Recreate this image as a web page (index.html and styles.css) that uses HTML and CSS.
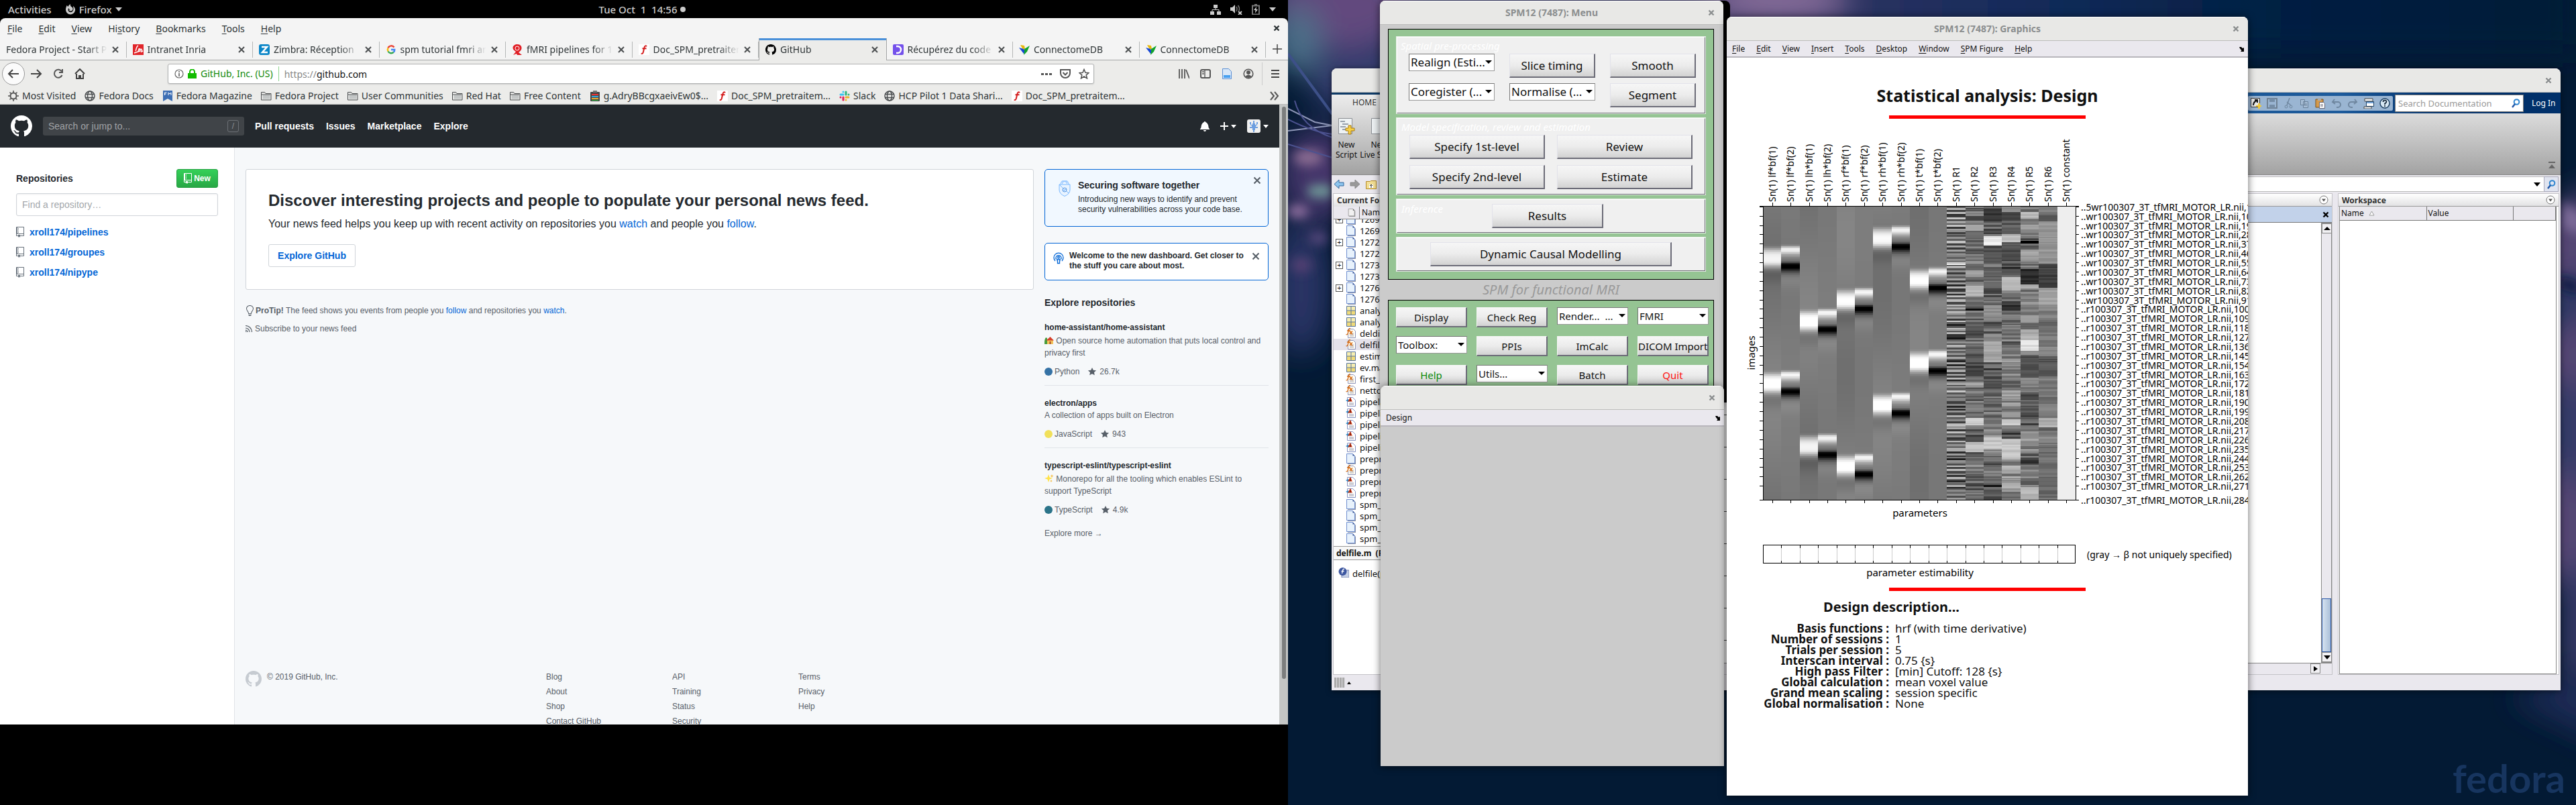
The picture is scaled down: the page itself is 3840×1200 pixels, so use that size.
FILE: index.html
```html
<!DOCTYPE html>
<html lang="en">
<head>
<meta charset="utf-8">
<title>Desktop</title>
<link rel="stylesheet" href="styles.css">
</head>
<body>
<svg class="defs" aria-hidden="true">
  <symbol id="mark" viewBox="0 0 16 16"><path d="M8 0C3.58 0 0 3.58 0 8c0 3.54 2.29 6.53 5.47 7.59.4.07.55-.17.55-.38 0-.19-.01-.82-.01-1.49-2.01.37-2.53-.49-2.69-.94-.09-.23-.48-.94-.82-1.13-.28-.15-.68-.52-.01-.53.63-.01 1.08.58 1.23.82.72 1.21 1.87.87 2.33.66.07-.52.28-.87.51-1.07-1.78-.2-3.64-.89-3.64-3.95 0-.87.31-1.59.82-2.15-.08-.2-.36-1.02.08-2.12 0 0 .67-.21 2.2.82.64-.18 1.32-.27 2-.27.68 0 1.36.09 2 .27 1.53-1.04 2.2-.82 2.2-.82.44 1.1.16 1.92.08 2.12.51.56.82 1.27.82 2.15 0 3.07-1.87 3.75-3.65 3.95.29.25.54.73.54 1.48 0 1.07-.01 1.93-.01 2.2 0 .21.15.46.55.38A8.013 8.013 0 0 0 16 8c0-4.42-3.58-8-8-8z"/></symbol>
  <symbol id="repo" viewBox="0 0 12 16"><path d="M4 9H3V8h1v1zm0-3H3v1h1V6zm0-2H3v1h1V4zm0-2H3v1h1V2zm8-1v12c0 .55-.45 1-1 1H6v2l-1.5-1.5L3 16v-2H1c-.55 0-1-.45-1-1V1c0-.55.45-1 1-1h10c.55 0 1 .45 1 1zm-1 10H1v2h2v-1h3v1h5v-2zm0-10H2v9h9V1z"/></symbol>
  <symbol id="star" viewBox="0 0 14 16"><path d="M14 6l-4.9-.64L7 1 4.9 5.36 0 6l3.6 3.26L2.67 14 7 11.67 11.33 14l-.93-4.74L14 6z"/></symbol>
  <symbol id="ox" viewBox="0 0 12 16"><path d="M7.48 8l3.75 3.75-1.48 1.48L6 9.48l-3.75 3.75-1.48-1.48L4.52 8 .77 4.25l1.48-1.48L6 6.52l3.75-3.75 1.48 1.48L7.48 8z"/></symbol>
  <symbol id="bell" viewBox="0 0 14 16"><path d="M14 12v1H0v-1l.73-.58c.77-.77.81-2.55 1.19-4.42C2.69 3.23 6 2 6 2c0-.55.45-1 1-1s1 .45 1 1c0 0 3.39 1.23 4.16 5 .38 1.88.42 3.66 1.19 4.42l.66.58H14zm-7 4c1.11 0 2-.89 2-2H5c0 1.11.89 2 2 2z"/></symbol>
  <symbol id="bulb" viewBox="0 0 12 16"><path d="M6.5 0C3.48 0 1 2.19 1 5c0 .92.55 2.25 1 3 1.34 2.25 1.78 2.78 2 4v1h5v-1c.22-1.22.66-1.75 2-4 .45-.75 1-2.08 1-3 0-2.81-2.48-5-5.5-5zm3.64 7.48c-.25.44-.47.8-.67 1.11-.86 1.41-1.25 2.06-1.45 3.23-.02.05-.02.11-.02.17H5c0-.06 0-.13-.02-.17-.2-1.17-.59-1.83-1.45-3.23-.2-.31-.42-.67-.67-1.11C2.44 6.78 2 5.65 2 5c0-2.2 2.02-4 4.5-4 1.22 0 2.36.42 3.22 1.19C10.55 2.94 11 3.94 11 5c0 .66-.44 1.78-.86 2.48zM4 14h5c-.23 1.14-1.3 2-2.5 2s-2.27-.86-2.5-2z"/></symbol>
  <symbol id="x" viewBox="0 0 12 12"><path d="M2 2l8 8M10 2l-8 8" fill="none" stroke="currentColor" stroke-width="2"/></symbol>
  <symbol id="wx" viewBox="0 0 10 10"><path d="M1.500 1.500l7 7M8.500 1.500l-7 7" fill="none" stroke="currentColor" stroke-width="2.400"/></symbol>
  <symbol id="folder" viewBox="0 0 16 16"><path d="M.5 2.500h5l1.500 2h8v9.500h-14.500z" fill="none" stroke="#4a4d4f"/><path d="M2.500 6.500h11v6h-11z" fill="#c3c6c6"/><path d="M1 6h13" stroke="#4a4d4f"/></symbol>
  <symbol id="globe" viewBox="0 0 16 16"><g fill="none" stroke="#4a4d4f" stroke-width="1.500"><circle cx="8" cy="8" r="7"/><ellipse cx="8" cy="8" rx="3.500" ry="7"/><path d="M1.500 5.500h13M1.500 10.500h13"/></g></symbol>
  <symbol id="fun" viewBox="0 0 16 16"><path d="M0 0h16v16H0z" fill="#fff"/><path d="M12 3.200C11 1.500 9 2 8.400 5L6.800 12c-.5 2-2 2.600-3 1.600M5.500 6.300h6" fill="none" stroke="#d41c1c" stroke-width="2"/></symbol>
  <symbol id="conn" viewBox="0 0 16 16"><path d="M2 1l6 1 1 5-3 1z" fill="#e8b90c"/><path d="M0 5l7 2 3 5-3 2z" fill="#1747d4"/><path d="M8 7l8-5-4 9-5 5 1-5z" fill="#12a32c"/></symbol>
  <symbol id="page" viewBox="0 0 16 16"><path d="M3 2h9l3 3v11H3z" fill="#8d94a8"/><path d="M1.500.5h9l3 3v11h-12z" fill="#e8f2fc" stroke="#6f8fd0"/><path d="M10.500.5v3h3z" fill="#35508f"/></symbol>
  <symbol id="mat" viewBox="0 0 16 16"><path d="M1.500 1.500h13v13h-13z" fill="#f7eeb0" stroke="#56749e"/><path d="M2 8h12v6H2z" fill="#f0da78"/><path d="M8 2v12M2 8h12" stroke="#56749e"/></symbol>
  <symbol id="fx" viewBox="0 0 16 16"><path d="M3.500 1.500h8l3 3v10h-11z" fill="#fffdf4" stroke="#8d94b8"/><path d="M6 8h6M6 10h6M6 12h6" stroke="#8b8b9b" stroke-width=".7"/><path d="M7 .8C5 0 4.800 2 4 5L3 8.500c-.5 1.500-1.500 1.500-2.500 1M2 4h5M6 4.500l4 5M10 4.500L6 9" fill="none" stroke="#d8690c" stroke-width="1.300"/></symbol>
  <symbol id="ml" viewBox="0 0 16 16"><path d="M2.500 1.500h8l4 4v9h-12z" fill="#fff" stroke="#8490c0"/><path d="M0 6l4-2 2 3-2 1z" fill="#2a8ac8"/><path d="M3 8l4-7 3 7-3-1z" fill="#cf3b14"/><path d="M7 1l1 6-2 1z" fill="#7d1708"/><path d="M5 10h7M5 12h7" stroke="#9a9aa8"/></symbol>
  <symbol id="lens" viewBox="0 0 14 14"><circle cx="8.500" cy="5" r="3.800" fill="none" stroke="#2f86d0" stroke-width="2"/><path d="M6 8l-4 5" stroke="#2358a8" stroke-width="2.500"/></symbol>
  <symbol id="drop" viewBox="0 0 14 14"><circle cx="7" cy="7" r="6" fill="#fff" stroke="#777"/><path d="M4 5.500h6l-3 4z" fill="#555"/></symbol>
  <symbol id="tear" viewBox="0 0 8 8"><path d="M0 1l3 0 2 2 2-1v6H2l1.500-2-2-2z" fill="#000"/></symbol>
</svg>

<div class="desk">
  <section class="screen-left">
    <header class="topbar">
      <div class="tb-left"><span>Activities</span>
        <span class="app"><svg width="16" height="16" viewBox="0 0 16 16"><path d="M8 15.500A7 7 0 0 1 1 8.500C1 5.500 2 4 2.500 2l2 2C5 2.500 6.500 1 8 0c-.5 2 0 3 2 4.500 3 2 1.500 6-1.500 6-2.500 0-3-2-3-2s1 .5 2 0c-1.500-.5-2-1.500-2-2.500-1 1-1.500 2.500-.500 4.500 2 3 7 2 7.500-2.500.3-2-.5-3-.5-5 2 1.500 3.500 4 3 6.500a7 7 0 0 1-7 6z" fill="#ccc"/></svg>Firefox <i class="tri"></i></span></div>
      <div class="clock">Tue Oct&nbsp; 1 &nbsp;14:56 <i class="dot"></i></div>
      <div class="tb-right">
        <svg width="16" height="16" viewBox="0 0 16 16"><path d="M5 1h6v5H5zM0 11h6v5H0zM10 11h6v5h-6z" fill="#ccc"/><path d="M8 6v2.500M3 11V8.500h10V11" fill="none" stroke="#ccc"/></svg>
        <svg width="18" height="16" viewBox="0 0 18 16"><path d="M0 5h3l4-4v13l-4-4H0z" fill="#ccc"/><path d="M9 4q2 3 0 7M11.500 2q3.500 5 1 8" fill="none" stroke="#777" stroke-width="1.500"/><path d="M12 11l5 5M17 11l-5 5" stroke="#ccc" stroke-width="1.800"/></svg>
        <svg width="12" height="16" viewBox="0 0 12 16"><path d="M1 2.500h10v13H1z" fill="none" stroke="#777" stroke-width="2"/><path d="M4 0h4v2H4z" fill="#777"/><path d="M7 4L3 9h2.500L5 13.500 9 8H6.500z" fill="#ccc"/></svg>
        <i class="tri"></i>
      </div>
    </header>

    <div class="firefox">
      <div class="menubar"><nav><a href="#"><u>F</u>ile</a><a href="#"><u>E</u>dit</a><a href="#"><u>V</u>iew</a><a href="#">Hi<u>s</u>tory</a><a href="#"><u>B</u>ookmarks</a><a href="#"><u>T</u>ools</a><a href="#"><u>H</u>elp</a></nav><button class="plain" aria-label="Close window"><svg width="10" height="10"><use href="#wx"/></svg></button></div>
      <div class="tabs">
        <div class="tab"><span>Fedora Project - Start Page</span><svg class="cl"><use href="#x"/></svg></div>
        <div class="tab"><svg class="fav" viewBox="0 0 16 16"><path d="M0 0h16v16H0z" fill="#e1262b"/><path d="M8 2c-3 1-3 7-4 8M2 13l9-3c-1-3 0-4-2-3l-1 4m3-3c2-2 3 0 2 3l2-1" fill="none" stroke="#fff" stroke-width="1.500"/></svg><span>Intranet Inria</span><svg class="cl"><use href="#x"/></svg></div>
        <div class="tab"><svg class="fav" viewBox="0 0 16 16"><rect width="16" height="16" rx="3" fill="#0a85c7"/><path d="M4 4h8l-7 8h8" fill="none" stroke="#fff" stroke-width="2.500"/></svg><span>Zimbra: Réception</span><svg class="cl"><use href="#x"/></svg></div>
        <div class="tab"><svg class="fav" viewBox="0 0 16 16"><g fill="none" stroke-width="2.500"><path d="M12.500 4.500A5.200 5.200 0 0 0 3.500 5.500" stroke="#ea4335"/><path d="M3.500 5.500a5.200 5.200 0 0 0 0 5" stroke="#fbbc05"/><path d="M3.500 10.500a5.200 5.200 0 0 0 8.300 1.200" stroke="#34a853"/><path d="M11.800 11.700A5 5 0 0 0 13.200 8H8" stroke="#4285f4"/></g></svg><span>spm tutorial fmri analysis</span><svg class="cl"><use href="#x"/></svg></div>
        <div class="tab"><svg class="fav" viewBox="0 0 16 16"><path d="M8 0c5 0 7 3 6.500 6.500C14 9 12 11 10 12l5 4H8l-1-2-5 2 4-5C3 9 1 7 1.500 4.500 2 2 5 0 8 0z" fill="#e01f26"/><circle cx="8" cy="6" r="3" fill="none" stroke="#fff"/></svg><span>fMRI pipelines for 1st level</span><svg class="cl"><use href="#x"/></svg></div>
        <div class="tab"><svg class="fav"><use href="#fun"/></svg><span>Doc_SPM_pretraitement</span><svg class="cl"><use href="#x"/></svg></div>
        <div class="tab on"><svg class="fav"><use href="#mark"/></svg><span>GitHub</span><svg class="cl"><use href="#x"/></svg></div>
        <div class="tab"><svg class="fav" viewBox="0 0 16 16"><rect width="16" height="16" rx="2" fill="#7451eb"/><path d="M5 3h2a5 5 0 0 1 0 10H5" fill="none" stroke="#fff" stroke-width="2.500"/></svg><span>Récupérez du code depuis</span><svg class="cl"><use href="#x"/></svg></div>
        <div class="tab"><svg class="fav"><use href="#conn"/></svg><span>ConnectomeDB</span><svg class="cl"><use href="#x"/></svg></div>
        <div class="tab"><svg class="fav"><use href="#conn"/></svg><span>ConnectomeDB</span><svg class="cl"><use href="#x"/></svg></div>
        <button class="newtab plain" aria-label="New tab"><svg width="16" height="16"><path d="M8 1v14M1 8h14" stroke="#444" stroke-width="1.500"/></svg></button>
      </div>
      <div class="navbar">
        <button class="back plain" aria-label="Back"><svg width="18" height="16" viewBox="0 0 18 16"><path d="M17 8H2M8 2L2 8l6 6" fill="none" stroke="#444" stroke-width="2"/></svg></button>
        <div class="navicons">
          <svg width="18" height="16" viewBox="0 0 18 16"><path d="M1 8h15M10 2l6 6-6 6" fill="none" stroke="#444" stroke-width="2"/></svg>
          <svg width="16" height="16" viewBox="0 0 16 16"><path d="M13 4.500A6 6 0 1 0 13.500 10M14 1v5H9" fill="none" stroke="#555" stroke-width="2"/></svg>
          <svg width="16" height="16" viewBox="0 0 16 16"><path d="M1 8l7-7 7 7M3 8v7h10V8M7 15v-4h2v4" fill="none" stroke="#444" stroke-width="2"/></svg>
        </div>
        <div class="urlbar">
          <svg width="14" height="14" viewBox="0 0 14 14"><circle cx="7" cy="7" r="6" fill="none" stroke="#666" stroke-width="1.200"/><path d="M7 6v5M7 3v2" stroke="#555" stroke-width="1.500"/></svg>
          <svg width="13" height="14" viewBox="0 0 13 14"><path d="M0 6h13v8H0z" fill="#12bc00"/><path d="M3 7V4a3.500 3.500 0 0 1 7 0v3" fill="none" stroke="#12bc00" stroke-width="2"/></svg>
          <span class="ev">GitHub, Inc. (US)</span>
          <label class="proto" for="url">https://</label><input id="url" value="github.com">
          <svg width="16" height="16"><path d="M0 7h4v3H0zM6 7h4v3H6zM12 7h4v3h-4z" fill="#555"/></svg>
          <svg width="16" height="16" viewBox="0 0 16 16"><path d="M1 2h14v5a7 7 0 0 1-14 0z" fill="none" stroke="#555" stroke-width="2"/><path d="M4.500 6L8 9.500 11.500 6" fill="none" stroke="#555" stroke-width="2"/></svg>
          <svg width="16" height="16" viewBox="0 0 16 16"><path d="M8 1.500l2 4.700 5 .4-3.800 3.200 1.200 5L8 12l-4.400 2.800 1.200-5L1 6.600l5-.4z" fill="none" stroke="#555" stroke-width="1.600"/></svg>
        </div>
        <div class="navright">
          <svg width="16" height="16"><path d="M1 1v14M5 1v14M9 1v14M11 2l5 13" stroke="#555" stroke-width="1.800"/></svg>
          <svg width="16" height="16"><rect x="1" y="2" width="14" height="12" rx="2" fill="none" stroke="#555" stroke-width="2"/><path d="M7 2v12M3 5h3M3 8h3" stroke="#555" stroke-width="1.300"/></svg>
          <svg width="16" height="16"><path d="M1.500.5h9l4 4v11h-13z" fill="#d8e7f8" stroke="#5b8fd4"/><path d="M3 10h10v4H3z" fill="#48a0f0"/></svg>
          <svg width="16" height="16"><circle cx="8" cy="8" r="6.800" fill="none" stroke="#555" stroke-width="1.600"/><circle cx="8" cy="6" r="3" fill="#555"/><path d="M3 12q5-5 10 0-5 4-10 0z" fill="#555"/></svg>
          <i class="sep"></i>
          <svg width="14" height="14"><path d="M1 2h12M1 7h12M1 12h12" stroke="#444" stroke-width="2"/></svg>
        </div>
      </div>
      <nav class="bookmarks">
        <a href="#"><svg class="fav" viewBox="0 0 16 16"><circle cx="8" cy="8" r="4.500" fill="none" stroke="#555" stroke-width="2"/><path d="M8 0v3M8 13v3M0 8h3M13 8h3M2.500 2.500l2 2M11.500 11.500l2 2M13.500 2.500l-2 2M4.500 11.500l-2 2" stroke="#555" stroke-width="1.600"/></svg>Most Visited</a>
        <a href="#"><svg class="fav"><use href="#globe"/></svg>Fedora Docs</a>
        <a href="#"><svg class="fav" viewBox="0 0 16 16"><path d="M1 0h14v16l-7-4-7 4z" fill="#3c6eb4"/><path d="M3.500 7V3h3M3.500 5h2M9 7V3l2 2 2-2v4" stroke="#fff" fill="none"/></svg>Fedora Magazine</a>
        <a href="#"><svg class="fav"><use href="#folder"/></svg>Fedora Project</a>
        <a href="#"><svg class="fav"><use href="#folder"/></svg>User Communities</a>
        <a href="#"><svg class="fav"><use href="#folder"/></svg>Red Hat</a>
        <a href="#"><svg class="fav"><use href="#folder"/></svg>Free Content</a>
        <a href="#"><svg class="fav" viewBox="0 0 16 16"><rect x="1" y="2" width="14" height="14" rx="1" fill="#444"/><path d="M5 0h6v3H5z" fill="#777"/><path d="M3 6h10" stroke="#e33" stroke-width="2"/><path d="M3 9h10" stroke="#3ad" stroke-width="2"/><path d="M3 12h10" stroke="#ea3" stroke-width="2"/><path d="M3 14.500h10" stroke="#3b4"/></svg>g.AdryBBcgxaeivEw0$...</a>
        <a href="#"><svg class="fav"><use href="#fun"/></svg>Doc_SPM_pretraitem...</a>
        <a href="#"><svg class="fav" viewBox="0 0 16 16"><g stroke-width="3" stroke-linecap="round"><path d="M2 6h4M6 2v0" stroke="#36c5f0"/><path d="M10 2v4M14 6v0" stroke="#2eb67d"/><path d="M10 10h4M10 14v0" stroke="#ecb22e"/><path d="M6 10v4M2 10v0" stroke="#e01e5a"/></g></svg>Slack</a>
        <a href="#"><svg class="fav"><use href="#globe"/></svg>HCP Pilot 1 Data Shari...</a>
        <a href="#"><svg class="fav"><use href="#fun"/></svg>Doc_SPM_pretraitem...</a>
        <a href="#" class="more" aria-label="More bookmarks"><svg width="16" height="14"><path d="M2 1l5 6-5 6M8 1l5 6-5 6" fill="none" stroke="#555" stroke-width="2"/></svg></a>
      </nav>

      <div class="view">
        <div class="gh">
          <header class="gh-head">
            <a href="#" aria-label="GitHub"><svg width="32" height="32" fill="#fff"><use href="#mark"/></svg></a>
            <div class="gh-search"><input placeholder="Search or jump to..." aria-label="Search or jump to"><kbd>/</kbd></div>
            <nav><a href="#">Pull requests</a><a href="#">Issues</a><a href="#">Marketplace</a><a href="#">Explore</a></nav>
            <div class="gh-user">
              <svg width="14" height="16" fill="#fff"><use href="#bell"/></svg>
              <span><svg width="12" height="12"><path d="M6 0v12M0 6h12" stroke="#fff" stroke-width="2"/></svg><i class="tri s"></i></span>
              <span><svg width="20" height="20" viewBox="0 0 20 20"><rect width="20" height="20" rx="3" fill="#f0f0f0"/><path d="M9 2h2v4h1v2h2V4h2v3h-1v2h-2v2h3v2h-4v3h-1v3H9v-3H8v-3H4v-2h3V9H5V7H4V4h2v4h2V6h1z" fill="#6d9ee0"/></svg><i class="tri s"></i></span>
            </div>
          </header>
          <div class="gh-body">
            <aside class="side">
              <div class="side-top"><h2>Repositories</h2><button class="new"><svg width="12" height="16" fill="#fff"><use href="#repo"/></svg>New</button></div>
              <input class="find" placeholder="Find a repository…" aria-label="Find a repository">
              <ul><li><a href="#"><svg width="12" height="16" fill="#6a737d"><use href="#repo"/></svg>xroll174/pipelines</a></li><li><a href="#"><svg width="12" height="16" fill="#6a737d"><use href="#repo"/></svg>xroll174/groupes</a></li><li><a href="#"><svg width="12" height="16" fill="#6a737d"><use href="#repo"/></svg>xroll174/nipype</a></li></ul>
            </aside>
            <div class="main">
              <div class="cols">
                <div class="feed">
                  <div class="hero"><h1>Discover interesting projects and people to populate your personal news feed.</h1><p>Your news feed helps you keep up with recent activity on repositories you <a href="#">watch</a> and people you <a href="#">follow</a>.</p><button class="explore">Explore GitHub</button></div>
                  <p class="tip"><svg width="12" height="16" fill="#586069"><use href="#bulb"/></svg><span><b>ProTip!</b> The feed shows you events from people you <a href="#">follow</a> and repositories you <a href="#">watch</a>.</span></p>
                  <p class="tip sub"><svg width="10" height="10" viewBox="0 0 10 10"><path d="M0 7a3 3 0 0 1 3 3H0zM0 4a6 6 0 0 1 6 6M0 .5A9.500 9.500 0 0 1 9.500 10" fill="none" stroke="#586069" stroke-width="1.200"/></svg><span>Subscribe to your news feed</span></p>
                </div>
                <aside class="right">
                  <div class="card sec"><svg width="18" height="24" viewBox="0 0 18 24"><path d="M3 6a6 6 0 0 1 12 0M5.500 5a3.500 3.500 0 0 1 7 0" fill="none" stroke="#9ecbff" stroke-width="1.500"/><path d="M1 6h16v8q0 6-8 9.500Q1 20 1 14zM1 6l6 6M11 15l4 4" fill="#e8f3ff" stroke="#79b8ff"/><circle cx="9" cy="14" r="3" fill="none" stroke="#4a90e0"/><path d="M7.500 14l1 1 2-2" fill="none" stroke="#2188ff"/></svg><div><h3>Securing software together</h3><p>Introducing new ways to identify and prevent security vulnerabilities across your code base.</p></div><button class="plain" aria-label="Dismiss"><svg width="12" height="16" fill="#586069"><use href="#ox"/></svg></button></div>
                  <div class="card wel"><svg width="16" height="18" viewBox="0 0 16 18"><g fill="none" stroke="#0366d6" stroke-width="1.300"><path d="M3 13a7 7 0 1 1 10 0M4.500 10.500a4 4 0 1 1 7 0"/><circle cx="8" cy="7.500" r="1.300"/><path d="M6 10.500h4v2H9.500v4h-3v-4H6z"/></g></svg><p>Welcome to the new dashboard. Get closer to the stuff you care about most.</p><button class="plain" aria-label="Dismiss"><svg width="12" height="16" fill="#586069"><use href="#ox"/></svg></button></div>
                  <h2>Explore repositories</h2>
                  <div class="repo"><h4>home-assistant/home-assistant</h4><p class="em"><svg width="14" height="12" viewBox="0 0 14 12"><path d="M0 8q1-8 4-5v9H0z" fill="#4a9c3c"/><path d="M4 6h9v6H4z" fill="#f2c35c"/><path d="M2.500 6.500L8.500 1 14 6.500z" fill="#d6402a"/><path d="M7.500 8h2v4h-2z" fill="#a4482a"/></svg> Open source home automation that puts local control and privacy first</p><div class="meta"><i class="lang py"></i>Python<svg width="14" height="14"><use href="#star"/></svg>26.7k</div></div>
                  <div class="repo"><h4>electron/apps</h4><p>A collection of apps built on Electron</p><div class="meta"><i class="lang js"></i>JavaScript<svg width="14" height="14"><use href="#star"/></svg>943</div></div>
                  <div class="repo"><h4>typescript-eslint/typescript-eslint</h4><p class="em"><svg width="14" height="12" viewBox="0 0 14 12"><path d="M6 0l1.500 4.500L12 6 7.500 7.500 6 12 4.500 7.500 0 6l4.500-1.500z" fill="#ffe34a"/><path d="M11 0l.7 2 2 .7-2 .6-.7 2-.7-2-2-.6 2-.7zM10 8l.6 1.400 1.400.6-1.400.6L10 12l-.6-1.400L8 10l1.400-.6z" fill="#f5b93a"/></svg> Monorepo for all the tooling which enables ESLint to support TypeScript</p><div class="meta"><i class="lang ts"></i>TypeScript<svg width="14" height="14"><use href="#star"/></svg>4.9k</div></div>
                  <a href="#" class="mo">Explore more →</a>
                </aside>
              </div>
              <footer><div class="copy"><svg width="24" height="24" fill="#c6cbd1"><use href="#mark"/></svg>© 2019 GitHub, Inc.</div>
                <ul><li><a href="#">Blog</a></li><li><a href="#">About</a></li><li><a href="#">Shop</a></li><li><a href="#">Contact GitHub</a></li></ul>
                <ul><li><a href="#">API</a></li><li><a href="#">Training</a></li><li><a href="#">Status</a></li><li><a href="#">Security</a></li></ul>
                <ul><li><a href="#">Terms</a></li><li><a href="#">Privacy</a></li><li><a href="#">Help</a></li></ul>
              </footer>
            </div>
          </div>
        </div>
        <div class="sbar"><i></i></div>
      </div>
    </div>
  </section>

  <section class="screen-right">
    <svg class="paper" viewBox="0 0 1920 1200" preserveAspectRatio="none" aria-hidden="true">
      <defs><filter id="b1" x="-50%" y="-50%" width="200%" height="200%"><feGaussianBlur stdDeviation="22"/></filter><filter id="b2" x="-50%" y="-50%" width="200%" height="200%"><feGaussianBlur stdDeviation="8"/></filter>
      <linearGradient id="sky"><stop offset="0" stop-color="#2c3c6e"/><stop offset=".35" stop-color="#3a3565"/><stop offset=".6" stop-color="#102a58"/><stop offset=".75" stop-color="#032044"/><stop offset="1" stop-color="#031a36"/></linearGradient></defs>
      <path d="M0 0h1920v1200H0z" fill="#031a34"/>
      <path d="M0-60h1920v140H0z" fill="url(#sky)" filter="url(#b1)"/>
      <g filter="url(#b1)"><ellipse cx="80" cy="10" rx="110" ry="60" fill="#624a7e"/><ellipse cx="15" cy="60" rx="35" ry="50" fill="#4c7088"/><ellipse cx="110" cy="120" rx="80" ry="50" fill="#343c70"/><ellipse cx="730" cy="0" rx="110" ry="30" fill="#8a6f9c"/><ellipse cx="20" cy="430" rx="40" ry="100" fill="#2a3466"/><ellipse cx="45" cy="260" rx="55" ry="70" fill="#44366a"/></g>
      <g filter="url(#b2)"><ellipse cx="30" cy="235" rx="22" ry="12" fill="#8a6c92"/><ellipse cx="48" cy="285" rx="20" ry="10" fill="#6f9a98"/><ellipse cx="15" cy="315" rx="16" ry="10" fill="#9070a0"/><ellipse cx="45" cy="355" rx="14" ry="10" fill="#54477c"/><ellipse cx="20" cy="395" rx="16" ry="12" fill="#513f72"/></g>
      <g fill="none" stroke-width="2"><path d="M0 162l40 20 26 5M0 195l66-8" stroke="#8f97b8"/><path d="M0 178q40 20 66 22M10 150q10 40 56 55M0 215l66 20" stroke="#4c5290"/><path d="M0 80L66 170" stroke="#3d5088" stroke-width="4"/></g>
      <g filter="url(#b1)"><path d="M1870 320l90-50v600l-60-20-30 40z" fill="#564674"/><path d="M1860 440l80-40v60l-80 60z" fill="#243460"/><path d="M1880 560l60 20v160l-70-60z" fill="#313a68"/><path d="M1900 840h60v160h-60z" fill="#3c3c6c"/><path d="M1820 1040l140-50v120z" fill="#1c2a54"/></g>
      <g filter="url(#b2)"><path d="M1900 300l30 20v30l-30-10z" fill="#7c6a98"/><path d="M1895 410l30 10v20l-30-10z" fill="#0c1c44"/></g>
    </svg>
    <div class="fedora">fedora</div>

    <div class="win matlab">
      <div class="title tall"><button class="plain" aria-label="Close"><svg width="10" height="10"><use href="#wx"/></svg></button></div>
      <div class="strip"><span class="home">HOME</span>
        <div class="quick">
          <svg width="16" height="16"><path d="M.5.500h13v13H.5z" fill="#e8e8e8" stroke="#333"/><path d="M4 11q0-5 5-7M6 3h4v4" fill="none" stroke="#111" stroke-width="2"/><path d="M11 8h3v3h2v2h-2v3h-3v-3H8v-2h3z" fill="#f3c838"/></svg>
          <svg width="16" height="16" opacity=".35"><path d="M1 1h14v14H1z" fill="none" stroke="#222" stroke-width="2"/><path d="M4 1h8v5H4zM4 10h8v5H4z" fill="#345"/></svg>
          <svg width="16" height="16" opacity=".35"><path d="M10 0L6 11M6 6l6 5" stroke="#234" stroke-width="1.500"/><circle cx="5" cy="13" r="2" fill="none" stroke="#234"/><circle cx="12" cy="13" r="2" fill="none" stroke="#234"/></svg>
          <svg width="16" height="16" opacity=".4"><path d="M2.500 2.500h6v8h-6zM6.500 5.500h7v9h-7z" fill="#bcd" stroke="#234"/><path d="M8 9h4M8 11h4" stroke="#234"/></svg>
          <svg width="16" height="16"><path d="M1 2h11v12H1z" fill="#d49a4c" stroke="#7c5018"/><path d="M4 0h5v4H4z" fill="#aaa"/><path d="M6.500 6.500h6l2 2v7h-8z" fill="#fff" stroke="#667"/><path d="M8 10h4M8 12h4" stroke="#667"/></svg>
          <svg width="16" height="16" opacity=".35"><path d="M5 2L2 6l4 3M2 6h8a4 4 0 0 1 0 8H8" fill="none" stroke="#234" stroke-width="2"/></svg>
          <svg width="16" height="16" opacity=".35"><path d="M11 2l3 4-4 3M14 6H6a4 4 0 0 0 0 8h2" fill="none" stroke="#234" stroke-width="2"/></svg>
          <svg width="16" height="16"><path d="M2 1h12v4H2zM1 13h11v3H1z" fill="#eee" stroke="#444"/><path d="M4.500 5.500h11v7h-11z" fill="#fff" stroke="#246"/><path d="M5 6h10v2H5z" fill="#7aa8dc"/></svg>
          <svg width="16" height="16"><circle cx="8" cy="8" r="7" fill="#d8e8f4" stroke="#246" stroke-width="1.500"/><path d="M5.500 6q0-2.500 2.500-2.500t2.500 2q0 1.500-2.500 3V10M8 11v2" fill="none" stroke="#123" stroke-width="1.700"/></svg>
        </div>
        <label class="docs"><input placeholder="Search Documentation" aria-label="Search Documentation"><svg width="14" height="14"><use href="#lens"/></svg></label>
        <a href="#" class="login">Log In</a>
      </div>
      <div class="ribbon">
        <button class="plain rb"><svg width="26" height="26" viewBox="0 0 26 26"><path d="M1.500 1.500h20v23h-20z" fill="#eef2f4" stroke="#8b8f94"/><path d="M4 6h7M7 10h9M4 14h8M7 18h6" stroke="#7c8794" stroke-width="1.500"/><path d="M16 12h4v4h5v4h-5v5h-4v-5h-4v-4h4z" fill="#f7cf45" stroke="#a77a10"/></svg><span>New<br>Script</span></button>
        <button class="plain rb"><svg width="26" height="26" viewBox="0 0 26 26"><path d="M1.500 1.500h20v23h-20z" fill="#eef2f4" stroke="#8b8f94"/></svg><span>New<br>Live Script</span></button>
        <svg class="fold" width="12" height="12"><path d="M1 1h10v2H1zM6 5l5 6H1z" fill="#666"/></svg>
      </div>
      <div class="addr">
        <svg width="16" height="16"><path d="M8 1v4h7v5H8v4L1 7.500z" fill="#8cc4ee" stroke="#35689c"/></svg><svg width="16" height="16"><path d="M8 1v4H1v5h7v4l7-6.500z" fill="#999" stroke="#888"/></svg><svg width="16" height="16"><path d="M.5 3.500h6l1-1h8v12H.5z" fill="#f3df95" stroke="#b58a2a"/><path d="M5 8h6v5H5z" fill="#fff"/><path d="M8 13V8M6 10l2-2 2 2" stroke="#333" fill="none"/></svg>
        <div class="path"><i class="tri k"></i></div><button class="plain go" aria-label="Search"><svg width="14" height="14"><use href="#lens"/></svg></button>
      </div>
      <div class="panes">
        <div class="pane folderpane">
          <div class="ph">Current Folder</div>
          <div class="fh"><span><svg width="12" height="14"><use href="#page"/></svg></span><span>Name</span></div>
          <ul class="files">
            <li class="x cut"><svg><use href="#page"/></svg>1269</li><li><svg><use href="#page"/></svg>1269</li><li class="x"><svg><use href="#page"/></svg>1272</li><li><svg><use href="#page"/></svg>1272</li><li class="x"><svg><use href="#page"/></svg>1273</li><li><svg><use href="#page"/></svg>1273</li><li class="x"><svg><use href="#page"/></svg>1276</li><li><svg><use href="#page"/></svg>1276</li>
            <li><svg><use href="#mat"/></svg>analyse.mat</li><li><svg><use href="#mat"/></svg>analyse.mat</li><li><svg><use href="#fx"/></svg>deldir.m</li><li class="sel"><svg><use href="#fx"/></svg>delfile.m</li><li><svg><use href="#mat"/></svg>estim.mat</li><li><svg><use href="#mat"/></svg>ev.mat</li><li><svg><use href="#fx"/></svg>first_level.m</li><li><svg><use href="#fx"/></svg>nettoyage.m</li>
            <li><svg><use href="#ml"/></svg>pipeline.m</li><li><svg><use href="#ml"/></svg>pipeline.m</li><li><svg><use href="#ml"/></svg>pipeline.m</li><li><svg><use href="#ml"/></svg>pipeline.m</li><li><svg><use href="#ml"/></svg>pipeline.m</li><li><svg><use href="#page"/></svg>preproc</li><li><svg><use href="#fx"/></svg>preproc.m</li><li><svg><use href="#ml"/></svg>preproc.m</li><li><svg><use href="#ml"/></svg>preproc.m</li><li><svg><use href="#page"/></svg>spm_</li><li><svg><use href="#page"/></svg>spm_</li><li><svg><use href="#page"/></svg>spm_</li><li><svg><use href="#page"/></svg>spm_</li>
          </ul>
          <div class="dh">delfile.m &nbsp;(Function)</div>
          <div class="dl"><svg width="16" height="15" viewBox="0 0 16 15"><path d="M5 4h11v11H5z" fill="#c6d0e6" stroke="#6c7cab"/><circle cx="6.500" cy="6" r="6" fill="#3c56a0"/><path d="M9 2.500q-2-1-2.500 2L5.500 9M4.500 5.500h4" fill="none" stroke="#fff" stroke-width="1.300"/></svg>delfile(path)</div>
        </div>
        <div class="pane cmd">
          <div class="ph"><svg width="14" height="14"><use href="#drop"/></svg></div>
          <div class="bluebar"><svg width="10" height="10"><use href="#wx"/></svg></div>
          <div class="editor"><div class="lines"></div><div class="vs"><b><i class="tri k up"></i></b><em></em><b><i class="tri k"></i></b></div></div>
          <div class="hs"><b><i class="tri k rt"></i></b></div>
        </div>
        <div class="pane ws">
          <div class="ph">Workspace<svg width="14" height="14"><use href="#drop"/></svg></div>
          <div class="grid"><table><thead><tr><th>Name <svg width="9" height="8"><path d="M1 7l3.500-6L8 7z" fill="#fff" stroke="#999"/></svg></th><th>Value</th><th></th></tr></thead></table></div>
        </div>
      </div>
      <div class="status"><i class="grip"></i><i class="tri k up sm"></i></div>
    </div>

    <div class="shade"></div>

    <div class="win menu">
      <div class="title">SPM12 (7487): Menu<button class="plain" aria-label="Close"><svg width="10" height="10"><use href="#wx"/></svg></button></div>
      <div class="mbody">
        <div class="green g1">
          <section class="grp p1"><h5>Spatial pre-processing</h5>
            <span class="pop"><select aria-label="Realign"><option>Realign (Esti...</option></select></span><button>Slice timing</button><button>Smooth</button>
            <span class="pop"><select aria-label="Coregister"><option>Coregister (...</option></select></span><span class="pop"><select aria-label="Normalise"><option>Normalise (...</option></select></span><button>Segment</button></section>
          <section class="grp p2"><h5>Model specification, review and estimation</h5><button>Specify 1st-level</button><button>Review</button><button>Specify 2nd-level</button><button>Estimate</button></section>
          <section class="grp p3"><h5>Inference</h5><button>Results</button></section>
          <section class="grp p4"><button>Dynamic Causal Modelling</button></section>
        </div>
        <p class="cap">SPM for functional MRI</p>
        <div class="green g2">
          <button>Display</button><button>Check Reg</button><span class="pop"><select aria-label="Render"><option>Render... &nbsp;...</option></select></span><span class="pop"><select aria-label="Modality"><option>FMRI</option></select></span>
          <span class="pop"><select aria-label="Toolbox"><option>Toolbox:</option></select></span><button>PPIs</button><button>ImCalc</button><button>DICOM Import</button>
          <button class="help">Help</button><span class="pop"><select aria-label="Utils"><option>Utils...</option></select></span><button>Batch</button><button class="quit">Quit</button>
        </div>
      </div>
    </div>

    <div class="win inter">
      <div class="title"><button class="plain" aria-label="Close"><svg width="10" height="10"><use href="#wx"/></svg></button></div>
      <div class="jm"><a href="#">Design</a><svg width="8" height="8"><use href="#tear"/></svg></div>
    </div>

    <div class="win graph">
      <div class="title">SPM12 (7487): Graphics<button class="plain" aria-label="Close"><svg width="10" height="10"><use href="#wx"/></svg></button></div>
      <div class="jm"><a href="#"><u>F</u>ile</a><a href="#"><u>E</u>dit</a><a href="#"><u>V</u>iew</a><a href="#"><u>I</u>nsert</a><a href="#"><u>T</u>ools</a><a href="#"><u>D</u>esktop</a><a href="#"><u>W</u>indow</a><a href="#"><u>S</u>PM Figure</a><a href="#"><u>H</u>elp</a><svg width="8" height="8"><use href="#tear"/></svg></div>
      <div class="fig">
        <h1>Statistical analysis: Design</h1>
        <hr>
        <svg id="plot" width="777" height="688" viewBox="0 0 777 688" role="img" aria-label="Design matrix"></svg>
        <hr class="second">
        <h2>Design description...</h2>
        <table><tbody>
          <tr><th scope="row">Basis functions :</th><td>hrf (with time derivative)</td></tr>
          <tr><th scope="row">Number of sessions :</th><td>1</td></tr>
          <tr><th scope="row">Trials per session :</th><td>5</td></tr>
          <tr><th scope="row">Interscan interval :</th><td>0.75 {s}</td></tr>
          <tr><th scope="row">High pass Filter :</th><td>[min] Cutoff: 128 {s}</td></tr>
          <tr><th scope="row">Global calculation :</th><td>mean voxel value</td></tr>
          <tr><th scope="row">Grand mean scaling :</th><td>session specific</td></tr>
          <tr><th scope="row">Global normalisation :</th><td>None</td></tr>
        </tbody></table>
      </div>
    </div>
  </section>
</div>
<script src="plot.js"></script>
</body>
</html>
```
FILE: plot.js
```js
// Design matrix: 284 scans by 17 regressors, drawn as grey rows, with axes and labels.
(function () {
  var svg = document.getElementById('plot');
  var NS = 'http://www.w3.org/2000/svg';
  var X0 = 54, Y0 = 130, W = 466, H = 438, N = 284, C = 17;
  var cw = W / C, rh = H / N;

  function add(name, attrs, text) {
    var e = document.createElementNS(NS, name);
    for (var k in attrs) e.setAttribute(k, attrs[k]);
    if (text !== undefined) e.textContent = text;
    svg.appendChild(e);
  }
  function line(x1, y1, x2, y2, c) {
    add('path', { d: 'M' + x1 + ' ' + y1 + 'L' + x2 + ' ' + y2, stroke: c || '#000', 'stroke-width': 1, 'shape-rendering': 'crispEdges' });
  }
  function cell(c, r, n, g) {
    g = Math.max(0, Math.min(255, Math.round(g)));
    var a = Math.round(X0 + c * cw), b = Math.round(X0 + (c + 1) * cw);
    var t = Math.round(Y0 + r * rh), u = Math.round(Y0 + (r + n) * rh);
    if (u > t) add('rect', { x: a, y: t, width: b - a, height: u - t, fill: 'rgb(' + g + ',' + g + ',' + g + ')' });
  }
  function gamma(k) { var f = 1; for (var i = 2; i < k; i++) f *= i; return f; }
  function hrf(t) {
    return t <= 0 ? 0 : Math.pow(t, 5) * Math.exp(-t) / gamma(6) - Math.pow(t, 15) * Math.exp(-t) / gamma(16) / 6;
  }
  function response(onsets, shift) {
    var v = [], m = 0;
    for (var r = 0; r < N; r++) {
      var s = 0;
      onsets.forEach(function (o) {
        for (var k = 0; k < 16; k++) {
          var t = (r - o - k) * 0.75;
          s += shift ? hrf(t) - hrf(t - 1) : hrf(t);
        }
      });
      v.push(s); m = Math.max(m, Math.abs(s));
    }
    return v.map(function (s) { return s / m; });
  }

  var onsets = [[35, 156], [96, 217], [76, 236], [16, 177], [56, 136]];
  onsets.forEach(function (o, i) {
    [0, 1].forEach(function (d) {
      var v = response(o, d);
      for (var r = 0; r < N; r++) {
        var drift = (d ? 3 : 11) * Math.sin(r / 42 + i * 1.9 + 3.4);
        cell(i * 2 + d, r, 1, 122 + drift + v[r] * 133);
      }
    });
  });

  var seed = 12345;
  function rnd() { seed = (seed * 1103515245 + 12345) % 2147483648; return seed / 2147483648; }
  var marks = [
    [[56, 1, 250], [114, 2, 30], [120, 2, 40], [127, 2, 20]],
    [[9, 5, 55], [18, 6, 160], [61, 8, 160], [77, 9, 185], [98, 3, 10], [154, 10, 65], [205, 7, 200], [228, 10, 190]],
    [[3, 12, 50], [29, 9, 240], [42, 13, 80], [55, 1, 0], [130, 20, 165], [224, 11, 200], [270, 2, 15]],
    [[6, 8, 60], [27, 8, 190], [40, 12, 75], [68, 14, 180], [96, 5, 40], [205, 7, 210], [224, 20, 200]],
    [[6, 6, 180], [34, 1, 0], [41, 12, 160], [61, 15, 40], [119, 10, 175], [130, 9, 225], [145, 20, 80], [244, 4, 55], [272, 12, 180]],
    [[8, 6, 95], [15, 40, 150], [61, 18, 65], [80, 15, 160], [145, 20, 85], [204, 1, 255], [205, 8, 175], [248, 33, 105]]
  ];
  for (var c = 0; c < 6; c++) {
    var slow = 0;
    for (var r = 0; r < N;) {
      var n = rnd() < 0.5 ? 2 : 1;
      slow = slow * 0.85 + (rnd() - 0.5) * 34;
      var g = c === 0 ? (r % 4 < 2 ? 70 : 165) + (rnd() - 0.5) * 80 : 112 + slow + (rnd() - 0.5) * (c === 5 ? 30 : 72);
      marks[c].forEach(function (m) { if (r >= m[0] && r < m[0] + m[1]) g = m[2] + (rnd() - 0.5) * (m[1] > 3 ? 28 : 0); });
      cell(10 + c, r, Math.min(n, N - r), g);
      r += n;
    }
  }
  cell(16, 0, N, 238);

  line(X0 - 5, Y0, X0 + W + 5, Y0); line(X0 - 5, Y0 + H, X0 + W + 5, Y0 + H);
  line(X0, Y0, X0, Y0 + H); line(X0 + W, Y0, X0 + W, Y0 + H);

  var names = [];
  ['lf', 'lh', 'rf', 'rh', 't'].forEach(function (n) { names.push(n + '*bf(1)', n + '*bf(2)'); });
  names.push('R1', 'R2', 'R3', 'R4', 'R5', 'R6', 'constant');
  names.forEach(function (n, i) {
    var x = Math.round(X0 + (i + 0.5) * cw);
    line(x, Y0 - 5, x, Y0); line(x, Y0 + H, x, Y0 + H + 5);
    add('text', { transform: 'translate(' + (x + 5) + ' ' + (Y0 - 6) + ') rotate(-90)' }, 'Sn(1) ' + n);
  });
  for (var k = 1; k <= 284; k = k === 271 ? 284 : k + 9) {
    var y = Math.round(Y0 + (k - 0.5) * rh);
    if (k === 284) y = Y0 + H;
    line(X0 - 5, y, X0, y); line(X0 + W, y, X0 + W + 5, y);
    add('text', { x: X0 + W + 8, y: y + 6 }, (k === 1 ? '..5wr' : k < 100 ? '..wr' : '..r') + '100307_3T_tfMRI_MOTOR_LR.nii,' + k);
    if (k === 284) break;
  }
  add('text', { transform: 'translate(42 349) rotate(-90)', 'text-anchor': 'middle', 'class': 'ax' }, 'images');
  add('text', { x: 288, y: 593, 'text-anchor': 'middle', 'class': 'ax' }, 'parameters');

  add('rect', { x: X0 + 0.5, y: 635.5, width: W - 1, height: 27, fill: '#fff', stroke: '#000' });
  for (var i = 1; i < C; i++) {
    var bx = Math.round(X0 + i * cw);
    line(bx, 636, bx, 662, '#ccc'); line(bx, 636, bx, 640); line(bx, 659, bx, 663);
  }
  add('text', { x: 537, y: 655 }, '(gray → β not uniquely specified)');
  add('text', { x: 288, y: 682, 'text-anchor': 'middle', 'class': 'ax' }, 'parameter estimability');
})();
```
FILE: styles.css
```css
* { box-sizing: border-box; margin: 0; padding: 0; }
body { background: #000; font-family: "Noto Sans", "DejaVu Sans", sans-serif; font-size: 14px; color: #2e3436; }
a { color: inherit; text-decoration: none; }
u { text-underline-offset: 2px; }
ul { list-style: none; }
svg { display: block; flex: none; }
input, button, select { font: inherit; color: inherit; }
.defs { position: absolute; width: 0; height: 0; }
.plain { background: none; border: 0; }
.desk { display: grid; grid-template-columns: 1fr 1fr; min-height: 100vh; }
.tri { display: inline-block; border: 5px solid transparent; border-top: 6px solid #ccc; border-bottom: 0; }
.tri.s { border-width: 4px; border-top: 5px solid #fff; border-bottom: 0; }
.tri.k { border-top-color: #000; }
.tri.up { border-top: 0; border-bottom: 5px solid #000; }
.tri.rt { border: 4px solid transparent; border-left: 6px solid #000; border-right: 0; }
.tri.sm { border-width: 0 3px 4px; }

/* Left screen */
.screen-left { aspect-ratio: 16 / 9; display: flex; flex-direction: column; overflow: hidden; align-self: start; min-height: 0; }
.topbar { display: grid; grid-template-columns: 1fr auto 1fr; height: 27px; align-items: center; padding: 0 18px 0 12px; font-size: 15px; font-weight: 500; color: #ccc; flex: none; }
.tb-left, .tb-right, .app, .clock { display: flex; align-items: center; }
.tb-left { gap: 20px; } .app { gap: 5px; }
.tb-right { gap: 14px; justify-content: flex-end; }
.clock { gap: 4px; }
.dot { width: 8px; height: 8px; border-radius: 50%; background: #ccc; }
.firefox { flex: 1; min-height: 0; display: flex; flex-direction: column; background: #f4f4f4; border-radius: 8px 8px 0 0; }
.menubar { display: flex; height: 30px; align-items: center; justify-content: space-between; padding: 0 12px 0 11px; flex: none; }
.menubar nav { display: flex; gap: 24px; }
.tabs { display: flex; height: 33px; flex: none; border-bottom: 1px solid #a4a6a6; }
.tab { flex: 1; min-width: 0; display: flex; align-items: center; gap: 6px; padding: 0 11px 0 9px; position: relative; height: 33px; }
.tab::after { content: ""; position: absolute; right: 0; top: 5px; bottom: 4px; width: 1px; background: #b5b7b7; }
.tab span { flex: 1; min-width: 0; overflow: hidden; white-space: nowrap; -webkit-mask-image: linear-gradient(to left, transparent, #000 30px); mask-image: linear-gradient(to left, transparent, #000 30px); }
.tab.on { background: #ececea; border: 1px solid #a4a6a6; border-width: 0 1px; box-shadow: inset 0 3px #4a90d9; }
.tab.on::after { display: none; }
.fav { width: 16px; height: 16px; }
.cl { width: 12px; height: 12px; color: #4a4d4f; }
.newtab { width: 33px; display: grid; place-items: center; }
.navbar { display: flex; height: 40px; align-items: center; background: #ececea; padding: 0 12px 0 3px; flex: none; }
.back { width: 34px; height: 34px; border: 1px solid #999; border-radius: 50%; background: #fbfbfb; display: grid; place-items: center; }
.navicons { display: flex; gap: 16px; width: 213px; padding-left: 8px; }
.urlbar { flex: 1; display: flex; align-items: center; height: 30px; background: #fff; border: 1px solid #b0b2b2; border-radius: 3px; box-shadow: 0 1px 2px #ccc; padding: 0 6px 0 9px; gap: 12px; }
.urlbar > svg:nth-child(2) { margin-left: -6px; }
.urlbar .ev { color: #128a0a; margin-left: -6px; padding-right: 8px; line-height: 22px; border-right: 1px solid #8fd48f; }
.proto { color: #888; margin-left: -4px; }
.urlbar input { flex: 1; border: 0; outline: 0; color: #111; margin-left: -12px; background: none; }
.navright { display: flex; gap: 16px; align-items: center; margin-left: 126px; }
.sep { width: 1px; height: 34px; background: #ccc; margin: 0 -4px; }
.bookmarks { display: flex; align-items: center; gap: 13px; height: 26px; padding: 0 12px; background: #ececea; border-bottom: 1px solid #bbb; flex: none; white-space: nowrap; }
.bookmarks a { display: flex; align-items: center; gap: 5px; }
.bookmarks .more { margin-left: auto; }
.view { flex: 1; min-height: 0; display: flex; overflow: hidden; }
.gh { flex: 1; min-width: 0; display: flex; flex-direction: column; overflow: hidden; font-family: "Liberation Sans", Arial, sans-serif; color: #24292e; background: #f6f8fa; }
.sbar { width: 13px; background: #c4c6c5; padding: 3px 3px 68px 4px; display: flex; }
.sbar i { flex: 1; background: #7c7e7e; border-radius: 4px; }
.gh-head { height: 64px; flex: none; background: #24292e; display: flex; align-items: center; padding: 0 16px; color: #fff; }
.gh-search { display: flex; align-items: center; width: 300px; height: 28px; margin: 0 16px; border-radius: 3px; background: #404448; padding: 0 8px; }
.gh-search input { flex: 1; background: none; border: 0; outline: 0; font-size: 14px; }
.gh-search input::placeholder { color: #a0a3a6; opacity: 1; }
kbd { width: 17px; height: 18px; border: 1px solid #6c7075; border-radius: 3px; text-align: center; font: 12px/16px "Liberation Sans", sans-serif; color: #8c9095; }
.gh-head nav { display: flex; gap: 18px; font-weight: 700; font-size: 14px; }
.gh-user { margin-left: auto; display: flex; align-items: center; gap: 16px; }
.gh-user span { display: flex; align-items: center; gap: 4px; }
.gh-body { flex: 1; min-height: 0; display: flex; }
.side { width: 350px; background: #fff; border-right: 1px solid #e1e4e8; padding: 32px 24px; flex: none; }
.side-top { display: flex; justify-content: space-between; align-items: center; height: 28px; }
.side h2, .right h2 { font-size: 14px; }
.new { height: 28px; width: 62px; display: flex; align-items: center; justify-content: center; gap: 3px; border: 1px solid #269f42; border-radius: 3px; background: linear-gradient(#34d058, #28a745); color: #fff; font-size: 12px; font-weight: 700; }
.find { width: 100%; height: 34px; margin-top: 8px; border: 1px solid #d1d5da; border-radius: 3px; padding: 0 8px; box-shadow: inset 0 1px 2px #1b1f2313; }
.find::placeholder { color: #a3a7ab; opacity: 1; }
.side ul { margin-top: 14px; }
.side li a { display: flex; align-items: center; gap: 8px; height: 20px; margin-bottom: 10px; color: #0366d6; font-weight: 700; line-height: 20px; }
.main { flex: 1; min-width: 0; padding: 32px 16px; }
.cols { display: flex; gap: 16px; min-height: 748px; }
.feed { flex: 1; min-width: 0; }
.hero { background: #fff; border: 1px solid #d1d5da; border-radius: 3px; padding: 32px 33px; height: 180px; }
.hero h1 { font-size: 24px; line-height: 28px; }
.hero p { font-size: 16px; line-height: 24px; margin-top: 9px; }
.hero a, .tip a { color: #0366d6; }
.explore { height: 34px; width: 130px; margin-top: 18px; background: #fff; border: 1px solid #d1d5da; border-radius: 3px; color: #0366d6; font-weight: 700; font-size: 14px; }
.tip { display: flex; align-items: center; gap: 3px; font-size: 12px; color: #586069; margin-top: 22px; line-height: 18px; }
.tip.sub { margin-top: 9px; gap: 4px; }
.right { width: 334px; flex: none; font-size: 12px; }
.card { display: flex; border: 1px solid #0366d6; border-radius: 5px; background: #fff; line-height: 15px; }
.card .plain { align-self: flex-start; margin-left: auto; }
.sec { background: #f1f8ff; padding: 8px 10px 0 20px; height: 86px; gap: 11px; }
.sec > svg { margin-top: 8px; }
.sec > div { width: 254px; margin: 5px -22px 0 0; }
.sec h3 { font-size: 14px; line-height: 20px; margin-bottom: 4px; }
.wel { margin-top: 24px; height: 56px; padding: 11px 12px 0; gap: 8px; font-weight: 700; }
.wel p { width: 264px; }
.wel > svg { margin-top: 2px; }
.right h2 { line-height: 20px; margin: 23px 0 18px; }
.repo { border-bottom: 1px solid #e1e4e8; padding: 17px 0 11px; color: #586069; line-height: 18px; }
h2 + .repo { padding-top: 0; }
.repo:last-of-type { border: 0; padding-bottom: 17px; }
.repo h4 { color: #24292e; font-size: 12px; }
.em { margin-top: 2px; }
.repo p svg { display: inline-block; vertical-align: -1px; }
.meta { display: flex; align-items: center; margin-top: 10px; }
.meta svg { margin: 0 4px 0 12px; fill: #586069; }
.lang { width: 12px; height: 12px; border-radius: 50%; margin-right: 3px; }
.py { background: #3572a5; } .js { background: #f1e05a; } .ts { background: #2b7489; }
.mo { color: #586069; line-height: 18px; }
footer { display: grid; grid-template-columns: 448px 188px 188px 188px; font-size: 12px; color: #586069; line-height: 18px; }
footer .copy { display: flex; gap: 8px; }
footer li { margin-bottom: 4px; }

/* Right screen */
.screen-right { position: relative; overflow: hidden; background: #031a34; }
.paper { position: absolute; inset: 0; width: 100%; height: 100%; }
.fedora { position: absolute; right: 16px; bottom: 0; font: 700 58px/80px Lato, sans-serif; color: #17355f; }
.win { position: absolute; display: flex; flex-direction: column; border-radius: 8px 8px 0 0; background: #cbcbcb; overflow: hidden; box-shadow: 0 1px 12px #0009; color: #111; }
.title { height: 36px; flex: none; display: flex; align-items: center; justify-content: center; position: relative; background: #e8e8e6; border-bottom: 1px solid #bdbdbb; box-shadow: inset 0 1px #fff; color: #8b8e8f; font-weight: 700; font-size: 14px; }
.title .plain { position: absolute; right: 13px; top: 13px; }
.jm { display: flex; align-items: center; gap: 17px; height: 25px; padding: 0 5px 0 8px; background: #eae8ee; border-bottom: 2px solid #b8b6bc; font-size: 12px; flex: none; }
.jm svg { margin-left: auto; }

/* MATLAB */
.matlab { left: 65px; right: 23px; top: 102px; height: 927px; background: #eae8ee; box-shadow: 0 1px 8px #0008; font-size: 12px; }
.strip { display: flex; align-items: center; height: 31px; background: linear-gradient(90deg, #0e3a66, #1d5b9c 82%, #00306a 90%); flex: none; }
.home { align-self: flex-end; width: 110px; height: 28px; line-height: 24px; padding-left: 31px; background: linear-gradient(#ececec, #dcdcdc); color: #333; }
.quick { margin-left: auto; display: flex; gap: 8px; height: 22px; align-items: center; background: #9ab5d2; padding: 0 4px; border-radius: 2px; }
.docs { display: flex; align-items: center; width: 192px; height: 26px; margin-left: 3px; background: #fff; border: 1px solid #777; padding: 0 4px; font-size: 13px; }
.docs input { flex: 1; min-width: 0; border: 0; outline: 0; }
.docs input::placeholder { color: #999; opacity: 1; }
.login { width: 55px; padding-left: 12px; color: #fff; }
.ribbon { height: 92px; flex: none; display: flex; position: relative; padding-top: 6px; background: linear-gradient(#dcdcdc, #b4b4b4 70%, #a2a2a2); border-bottom: 1px solid #888; }
.rb { width: 42px; margin-left: 1px; display: flex; flex-direction: column; align-items: center; gap: 7px; line-height: 15px; white-space: nowrap; margin-right: 6px; }
.fold { position: absolute; right: 7px; bottom: 8px; }
.addr { display: flex; align-items: center; gap: 8px; height: 27px; padding: 0 3px; flex: none; }
.path { flex: 1; height: 23px; background: #fff; border: 1px solid #bbb; display: flex; align-items: center; justify-content: flex-end; padding-right: 5px; }
.go { width: 22px; height: 23px; margin-left: -9px; background: #e0e4f0; border: 1px solid #aab; display: grid; place-items: center; }
.panes { flex: 1; min-height: 0; display: flex; gap: 8px; padding: 0 2px; }
.pane { display: flex; flex-direction: column; min-height: 0; border: 1px solid #c4c3c8; background: #fff; overflow: hidden; }
.folderpane { width: 300px; flex: none; font-size: 13px; }
.ph { height: 19px; flex: none; display: flex; align-items: center; justify-content: space-between; padding: 0 5px; background: linear-gradient(#fff, #e2e2e4); font-weight: 700; font-size: 12px; color: #333; border-bottom: 1px solid #999; }
.folderpane .ph { border: 0; }
.fh { display: flex; height: 19px; flex: none; background: #eae8ee; border-bottom: 1px solid #888; font-size: 12px; line-height: 18px; }
.fh span:first-child { width: 39px; border-right: 1px solid #777; padding: 2px 0 0 21px; filter: grayscale(1); }
.fh span:last-child { padding-left: 3px; }
.files { flex: none; height: 487px; overflow: hidden; }
.files li { display: flex; align-items: center; gap: 5px; height: 17px; padding-left: 18px; position: relative; white-space: nowrap; }
.files svg { width: 16px; height: 16px; }
.files .cut { margin-top: -9px; }
.files .sel { background: #e5e3eb; }
.files .x::before { content: "+"; position: absolute; left: 3px; top: 4px; width: 9px; height: 9px; border: 1px solid #555; font-size: 11px; line-height: 7px; text-align: center; }
.dh { height: 21px; flex: none; border: solid #999; border-width: 1px 0; background: #f7f7f7; font-size: 12px; font-weight: 700; padding-left: 4px; line-height: 20px; }
.dl { display: flex; gap: 5px; padding: 11px 7px; }
.cmd { flex: 1; }
.cmd .ph { justify-content: flex-end; }
.bluebar { height: 24px; flex: none; background: #c2d2ea; border-bottom: 1px solid #777; display: flex; justify-content: flex-end; align-items: center; padding-right: 4px; color: #000; }
.editor { flex: 1; min-height: 0; display: flex; }
.lines { flex: 1; background: repeating-linear-gradient(#fff 0 46px, #444 46px 47px, #fff 47px 48px); background-size: 300px 100%; background-repeat: no-repeat; }
.vs { width: 16px; border: 1px solid #888; background: #eae8ee; display: flex; flex-direction: column; }
.vs b, .hs b { width: 15px; height: 15px; display: grid; place-items: center; background: #f2f1f4; border: 1px solid #888; flex: none; }
.vs em { margin-top: auto; height: 80px; background: linear-gradient(90deg, #d6e3f0, #aabfd8); border: 1px solid #2c58a8; }
.hs { height: 17px; flex: none; background: #eae8ee; border-top: 1px solid #888; display: flex; justify-content: flex-end; padding-right: 17px; }
.ws { width: 330px; flex: none; }
.grid { flex: 1; border: 1px solid #888; border-top: 0; margin: 0 3px 0 1px; }
.grid table { width: 100%; border-collapse: collapse; table-layout: fixed; }
.grid th { height: 20px; width: 129px; background: #eae8ee; border-right: 1px solid #777; border-bottom: 1px solid #777; font-weight: 400; text-align: left; padding-left: 2px; }
.grid th:last-child { width: auto; }
.grid th svg { display: inline-block; margin-left: 4px; }
.status { height: 23px; flex: none; display: flex; align-items: center; gap: 3px; padding-left: 4px; }
.grip { width: 16px; height: 15px; background: repeating-linear-gradient(90deg, #aaa 0 3px, #dddbe0 3px 4px); }

/* SPM windows */
.shade { position: absolute; left: 600px; top: 1px; width: 59px; height: 599px; background: #000; border-radius: 0 8px 0 0; }
.menu { left: 137px; top: 1px; width: 512px; height: 600px; }
.mbody { padding: 6px 14px 0 12px; }
.green { background: #95c493; border: 1px solid #000; }
.g1 { padding: 11px 12px 12px; display: flex; flex-direction: column; gap: 7px; height: 374px; }
.grp { background: #f0f0f0; border: 1px solid #fff; border-right-color: #6c6c74; border-bottom-color: #6c6c74; outline: 1px solid #e6eee6; display: grid; align-content: start; }
.grp h5 { grid-column: 1 / -1; font: italic 15px/24px "Noto Sans", sans-serif; color: #fff; margin-left: -12px; }
.grp button, .grp select { font-size: 17px; }
.menu button:not(.plain) { border: 1px solid #e2e2ea; border-right: 2px solid #6c6c78; border-bottom: 2px solid #6c6c78; background: linear-gradient(#f6f6f6, #ececec 50%, #d2d2d2); height: 36px; white-space: nowrap; padding: 0; }
.p1 { padding-left: 17px; height: 114px; grid-template-columns: 128px 128px 128px; gap: 0 22px; grid-template-rows: 24px 44px 44px; }
.p2 { padding-left: 18px; height: 114px; grid-template-columns: 202px 202px; gap: 0 18px; grid-template-rows: 24px 45px 45px; }
.p3 { padding: 6px 0 0 18px; height: 50px; grid-template-columns: 123px 166px; }
.p3 h5 { grid-column: auto; line-height: 14px; }
.p4 { padding-top: 6px; height: 51px; grid-template-columns: 360px; justify-content: center; }
.pop { position: relative; height: 26px; }
.pop::after { content: ""; position: absolute; right: 4px; top: 10px; border: 5px solid transparent; border-top: 5px solid #000; border-bottom: 0; pointer-events: none; }
.pop select { appearance: none; width: 100%; height: 100%; background: #fff; border: 1px solid #777; border-right-color: #999; border-bottom-color: #999; border-radius: 0; padding: 0 2px; line-height: 22px; }
.cap { text-align: center; font-size: 20px; font-style: italic; line-height: 30px; color: #999; }
.g2 { display: grid; grid-template-columns: repeat(4, 106px); gap: 0 14px; grid-template-rows: repeat(3, 43px); padding: 10px 7px 0 11px; font-size: 15px; height: 150px; }
.menu .g2 button { height: 30px; border-color: #f6f6f6 #6c6c78 #6c6c78 #f6f6f6; }
.menu .help { color: #0c8a0c; } .menu .quit { color: #f11; }
.inter { left: 138px; top: 575px; width: 512px; height: 567px; }
.graph { left: 654px; top: 25px; width: 777px; height: 1161px; background: #fff; }
.fig h1 { font-size: 25px; line-height: 34px; text-align: center; margin: 39px 0 13px; }
.fig hr { border: 0; height: 5px; width: 293px; background: #f00; margin-left: 242px; }
#plot { font: 14px "Noto Sans", sans-serif; }
#plot .ax { font-size: 15px; }
.fig .second { margin-top: 11px; }
.fig h2 { font-size: 20px; line-height: 26px; margin: 11px 0 11px 144px; }
.fig table { border-collapse: collapse; font-size: 17px; line-height: 16px; }
.fig th { width: 242px; text-align: right; }
.fig td { padding-left: 9px; }
```
